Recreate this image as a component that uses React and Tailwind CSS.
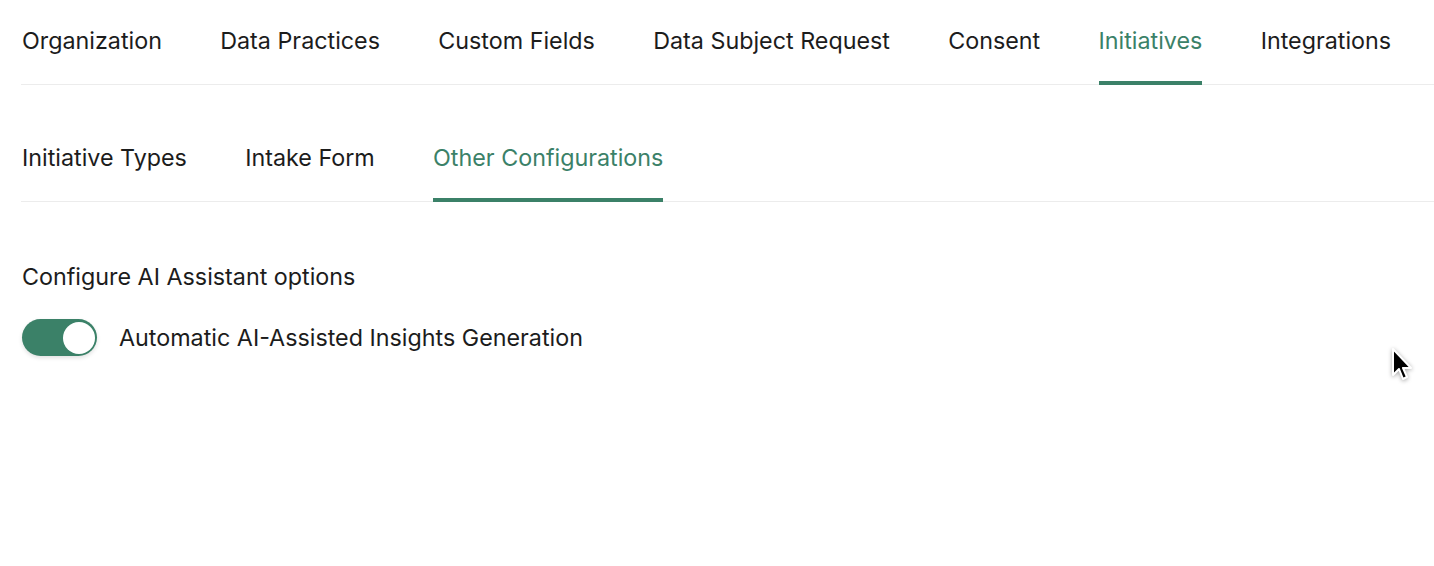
import { useState } from "react";

const mainTabs = [
  "Organization",
  "Data Practices",
  "Custom Fields",
  "Data Subject Request",
  "Consent",
  "Initiatives",
  "Integrations",
];

const subTabs = ["Initiative Types", "Intake Form", "Other Configurations"];

function TabRow({ tabs, active, onChange, className = "" }) {
  return (
    <div className={`-ml-px flex gap-[58.3px] border-b border-[#ececec] pl-px ${className}`}>
      {tabs.map((t) => (
        <button
          key={t}
          onClick={() => onChange(t)}
          className={`-mb-px pt-[27px] pb-[26px] border-b-4 text-[23.3px] leading-[28px] ${
            t === active
              ? "border-[#3b8168] text-[#3b8168]"
              : "border-transparent text-[#1c1c1c]"
          }`}
        >
          {t}
        </button>
      ))}
    </div>
  );
}

export default function App() {
  const [tab, setTab] = useState("Initiatives");
  const [subTab, setSubTab] = useState("Other Configurations");
  const [autoInsights, setAutoInsights] = useState(true);

  return (
    <div
      className="relative min-h-screen bg-white pl-[22px] text-[#1c1c1c]"
      style={{ fontFamily: "Inter, 'Noto Sans', sans-serif" }}
    >
      <TabRow tabs={mainTabs} active={tab} onChange={setTab} />
      <TabRow tabs={subTabs} active={subTab} onChange={setSubTab} className="mt-8" />

      {/* AI assistant settings */}
      <div className="pt-[61px]">
        <p className="text-[23.3px] leading-[28px]">Configure AI Assistant options</p>
        <div className="mt-7 flex items-center gap-[22px]">
          <button
            onClick={() => setAutoInsights(!autoInsights)}
            className={`flex h-[37px] w-[75px] items-center rounded-full px-[2.5px] shadow-[0_2px_4px_rgba(0,0,0,0.12)] ${
              autoInsights ? "justify-end bg-[#3b8168]" : "justify-start bg-gray-300"
            }`}
          >
            <span className="h-[32px] w-[32px] rounded-full bg-white" />
          </button>
          <span className="text-[23.3px] leading-[28px]">
            Automatic AI-Assisted Insights Generation
          </span>
        </div>
      </div>

      {/* mouse pointer */}
      <svg
        className="absolute left-[1391px] top-[348px] drop-shadow-[0_1px_2px_rgba(0,0,0,0.35)]"
        width="24"
        height="36"
        viewBox="0 0 24 36"
      >
        <path
          d="M2 1 L2 27 L8 21 L12 31 L16 29 L12 20 L20 20 Z"
          fill="#000"
          stroke="#fff"
          strokeWidth="2"
          strokeLinejoin="round"
        />
      </svg>
    </div>
  );
}
